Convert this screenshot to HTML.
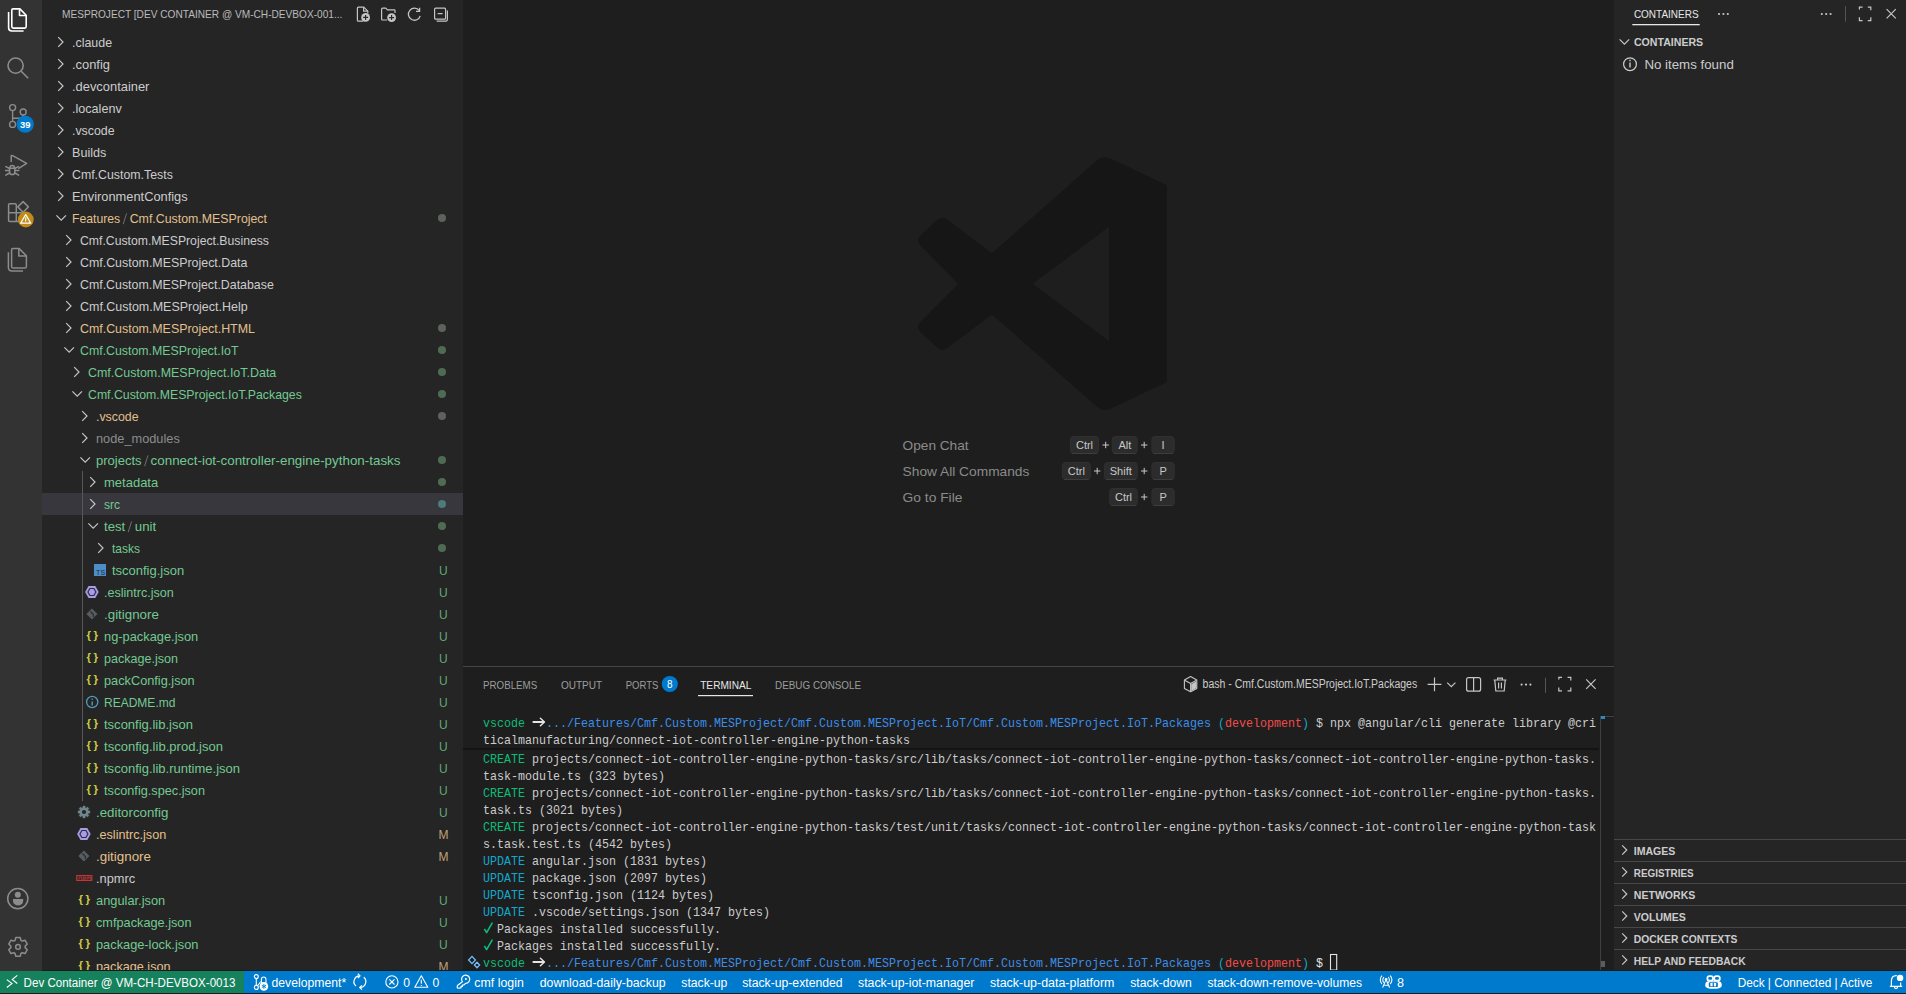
<!DOCTYPE html>
<html><head><meta charset="utf-8"><title>VS Code</title>
<style>
html,body{margin:0;padding:0;background:#1e1e1e;width:1906px;height:994px;overflow:hidden;}
svg{display:block;font-family:"Liberation Sans", sans-serif;}
</style></head><body>
<svg width="1906" height="994" viewBox="0 0 1906 994">
<rect x="0" y="0" width="1906" height="994" fill="#1e1e1e" />
<rect x="0" y="0" width="42" height="971" fill="#333333" />
<rect x="42" y="0" width="421" height="971" fill="#252526" />
<rect x="1614" y="0" width="292" height="971" fill="#252526" />
<g fill="none" stroke="#ffffff" stroke-width="1.6" stroke-linejoin="round"><path d="M13,8.9 H19.9 L26.2,15.2 V26.6 Q26.2,28.1 24.7,28.1 H13.3 Q11.8,28.1 11.8,26.6 V10.3 Q11.8,8.9 13,8.9 Z"/><path d="M19.5,9.2 V15.5 H26"/><path d="M8.6,12 V27.8 Q8.6,31 11.8,31 H23.6"/></g>
<g fill="none" stroke="#8c8c8c" stroke-width="1.6"><circle cx="15.6" cy="65.6" r="7.6"/><path d="M21.2,71.2 L28.2,78.2"/></g>
<g fill="none" stroke="#8c8c8c" stroke-width="1.4"><circle cx="12.6" cy="107.6" r="3"/><circle cx="23.2" cy="112" r="3"/><circle cx="12.6" cy="124.4" r="3"/><path d="M12.6,110.6 V121.4 M23.2,115 Q23.2,118.2 19,118.2 H12.8"/></g>
<circle cx="25.2" cy="124.2" r="8.6" fill="#007acc"/>
<text x="25.2" y="127.6" font-size="9.5" font-weight="bold" fill="#ffffff" text-anchor="middle">39</text>
<g fill="none" stroke="#8c8c8c" stroke-width="1.5" stroke-linejoin="round" stroke-linecap="round"><path d="M11.2,161.6 V156.4 Q11.2,155 12.6,155.6 L26.6,163.4 L18.8,168.4"/><path d="M9.6,168.2 V172.2 Q9.6,174.6 12.2,174.6 Q14.8,174.6 14.8,172.2 V168.2 Z"/><path d="M9.9,168 Q9.9,165.4 12.2,165.4 Q14.5,165.4 14.5,168"/><path d="M5.8,166.6 L9.2,168.2 M18.6,166.6 L15.2,168.2 M5.6,170.6 H9.2 M18.8,170.6 H15.2 M5.8,175.2 L9.4,173 M18.6,175.2 L15,173"/></g>
<g fill="none" stroke="#8c8c8c" stroke-width="1.5" stroke-linejoin="round"><path d="M9.6,203.7 H15 Q16.3,203.7 16.3,205 V221.6 H9.6 Q8.6,221.6 8.6,220.6 V204.7 Q8.6,203.7 9.6,203.7 Z M8.6,212.8 H24.6 M16.3,212.8 V221.6 H24"/><path d="M23.1,201.6 L28.4,206.9 L23.1,212.2 L17.8,206.9 Z"/></g>
<circle cx="25.8" cy="219.5" r="7.9" fill="#c08b18"/>
<path d="M25.7,214.6 L30.8,223.2 H20.6 Z" fill="none" stroke="#ffffff" stroke-width="1.2" stroke-linejoin="round"/>
<path d="M25.7,217.4 V221.6" stroke="#ffffff" stroke-width="1.1"/>
<g fill="none" stroke="#8c8c8c" stroke-width="1.5" stroke-linejoin="round"><path d="M12.8,248.6 H19.2 L26.4,255.8 V266.4 Q26.4,268 24.8,268 H13.2 Q11.6,268 11.6,266.4 V250 Q11.6,248.6 12.8,248.6 Z"/><path d="M18.8,248.9 V255.9 H26"/><path d="M8.4,252.2 V267.6 Q8.4,271 11.8,271 H23"/></g>
<g fill="none" stroke="#8c8c8c" stroke-width="1.5"><circle cx="17.8" cy="898.6" r="10.1"/></g>
<circle cx="17.8" cy="894.8" r="3" fill="#8c8c8c"/>
<path d="M13,898.9 H23.2 V900.6 Q23.2,905.4 18.1,905.4 Q13,905.4 13,900.6 Z" fill="#8c8c8c"/>
<path d="M15.07,940.32 L15.82,937.45 L20.18,937.45 L20.93,940.32 L22.23,941.08 L25.09,940.28 L27.28,944.06 L25.16,946.15 L25.16,947.65 L27.28,949.74 L25.09,953.52 L22.23,952.72 L20.93,953.48 L20.18,956.35 L15.82,956.35 L15.07,953.48 L13.77,952.72 L10.91,953.52 L8.72,949.74 L10.84,947.65 L10.84,946.15 L8.72,944.06 L10.91,940.28 L13.77,941.08Z" fill="none" stroke="#8c8c8c" stroke-width="1.5" stroke-linejoin="round"/><circle cx="18" cy="946.9" r="2.3" fill="none" stroke="#8c8c8c" stroke-width="1.5"/>
<text x="62" y="17.8" font-size="11" fill="#bbbbbb" textLength="280.4" lengthAdjust="spacingAndGlyphs" >MESPROJECT [DEV CONTAINER @ VM-CH-DEVBOX-001...</text>
<g fill="none" stroke="#c5c5c5" stroke-width="1.2" stroke-linejoin="round"><path d="M363.4,21.2 H358.4 Q357.4,21.2 357.4,20.2 V8.2 Q357.4,7.2 358.4,7.2 H363.8 L367.8,11.2 V13.4"/><path d="M363.6,7.4 V11.2 H367.6"/></g>
<circle cx="365.6" cy="17.4" r="4.4" fill="#c5c5c5"/><path d="M365.6,14.9 V19.9 M363.1,17.4 H368.1" stroke="#252526" stroke-width="1.1"/>
<g fill="none" stroke="#c5c5c5" stroke-width="1.2" stroke-linejoin="round"><path d="M387.2,20 H382.4 Q381.6,20 381.6,19.2 V9.2 Q381.6,8.2 382.6,8.2 H385.8 L387.4,9.8 H394.2 Q395,9.8 395,10.6 V13"/></g>
<circle cx="391.6" cy="17.6" r="4.4" fill="#c5c5c5"/><path d="M391.6,15.1 V20.1 M389.1,17.6 H394.1" stroke="#252526" stroke-width="1.1"/>
<g fill="none" stroke="#c5c5c5" stroke-width="1.3"><path d="M419.2,10.6 A6,6 0 1,0 420.2,15.8"/><path d="M419.6,7.8 V11.4 H416" stroke-linejoin="round"/></g>
<g fill="none" stroke="#c5c5c5" stroke-width="1.2" stroke-linejoin="round"><rect x="434.6" y="8.2" width="11" height="11" rx="1"/><path d="M437.6,13.6 H442.6"/><path d="M447.4,10.4 V19.6 Q447.4,21.2 445.8,21.2 H436.6"/></g>
<g id="tree">
<rect x="42" y="493" width="421" height="22" fill="#37373d" />
<rect x="82" y="471" width="1" height="330" fill="#585858" />
<path d="M58.2,37.2 L63.0,42.0 L58.2,46.8" fill="none" stroke="#c5c5c5" stroke-width="1.2"/>
<text x="72" y="47" font-size="13" fill="#cccccc" textLength="40.1" lengthAdjust="spacingAndGlyphs" >.claude</text>
<path d="M58.2,59.2 L63.0,64.0 L58.2,68.8" fill="none" stroke="#c5c5c5" stroke-width="1.2"/>
<text x="72" y="69" font-size="13" fill="#cccccc" textLength="38.0" lengthAdjust="spacingAndGlyphs" >.config</text>
<path d="M58.2,81.2 L63.0,86.0 L58.2,90.8" fill="none" stroke="#c5c5c5" stroke-width="1.2"/>
<text x="72" y="91" font-size="13" fill="#cccccc" textLength="77.4" lengthAdjust="spacingAndGlyphs" >.devcontainer</text>
<path d="M58.2,103.2 L63.0,108.0 L58.2,112.8" fill="none" stroke="#c5c5c5" stroke-width="1.2"/>
<text x="72" y="113" font-size="13" fill="#cccccc" textLength="49.7" lengthAdjust="spacingAndGlyphs" >.localenv</text>
<path d="M58.2,125.2 L63.0,130.0 L58.2,134.8" fill="none" stroke="#c5c5c5" stroke-width="1.2"/>
<text x="72" y="135" font-size="13" fill="#cccccc" textLength="42.6" lengthAdjust="spacingAndGlyphs" >.vscode</text>
<path d="M58.2,147.2 L63.0,152.0 L58.2,156.8" fill="none" stroke="#c5c5c5" stroke-width="1.2"/>
<text x="72" y="157" font-size="13" fill="#cccccc" textLength="34.3" lengthAdjust="spacingAndGlyphs" >Builds</text>
<path d="M58.2,169.2 L63.0,174.0 L58.2,178.8" fill="none" stroke="#c5c5c5" stroke-width="1.2"/>
<text x="72" y="179" font-size="13" fill="#cccccc" textLength="100.8" lengthAdjust="spacingAndGlyphs" >Cmf.Custom.Tests</text>
<path d="M58.2,191.2 L63.0,196.0 L58.2,200.8" fill="none" stroke="#c5c5c5" stroke-width="1.2"/>
<text x="72" y="201" font-size="13" fill="#cccccc" textLength="115.7" lengthAdjust="spacingAndGlyphs" >EnvironmentConfigs</text>
<path d="M56.4,215.4 L61.2,220.2 L66.0,215.4" fill="none" stroke="#c5c5c5" stroke-width="1.2"/>
<text x="72" y="223" font-size="13" fill="#e2c08d" textLength="48.2" lengthAdjust="spacingAndGlyphs" >Features</text>
<path d="M126.6,213.4 L123.2,224.2" stroke="#6f6f6f" stroke-width="1"/>
<text x="129.7" y="223" font-size="13" fill="#e2c08d" textLength="137.3" lengthAdjust="spacingAndGlyphs" >Cmf.Custom.MESProject</text>
<circle cx="442" cy="218" r="4" fill="#5d625c"/>
<path d="M66.2,235.2 L71.0,240.0 L66.2,244.8" fill="none" stroke="#c5c5c5" stroke-width="1.2"/>
<text x="80" y="245" font-size="13" fill="#cccccc" textLength="189.0" lengthAdjust="spacingAndGlyphs" >Cmf.Custom.MESProject.Business</text>
<path d="M66.2,257.2 L71.0,262.0 L66.2,266.8" fill="none" stroke="#c5c5c5" stroke-width="1.2"/>
<text x="80" y="267" font-size="13" fill="#cccccc" textLength="167.4" lengthAdjust="spacingAndGlyphs" >Cmf.Custom.MESProject.Data</text>
<path d="M66.2,279.2 L71.0,284.0 L66.2,288.8" fill="none" stroke="#c5c5c5" stroke-width="1.2"/>
<text x="80" y="289" font-size="13" fill="#cccccc" textLength="193.8" lengthAdjust="spacingAndGlyphs" >Cmf.Custom.MESProject.Database</text>
<path d="M66.2,301.2 L71.0,306.0 L66.2,310.8" fill="none" stroke="#c5c5c5" stroke-width="1.2"/>
<text x="80" y="311" font-size="13" fill="#cccccc" textLength="167.6" lengthAdjust="spacingAndGlyphs" >Cmf.Custom.MESProject.Help</text>
<path d="M66.2,323.2 L71.0,328.0 L66.2,332.8" fill="none" stroke="#c5c5c5" stroke-width="1.2"/>
<text x="80" y="333" font-size="13" fill="#e2c08d" textLength="174.9" lengthAdjust="spacingAndGlyphs" >Cmf.Custom.MESProject.HTML</text>
<circle cx="442" cy="328" r="4" fill="#5d625c"/>
<path d="M64.4,347.4 L69.2,352.2 L74.0,347.4" fill="none" stroke="#c5c5c5" stroke-width="1.2"/>
<text x="80" y="355" font-size="13" fill="#73c991" textLength="158.5" lengthAdjust="spacingAndGlyphs" >Cmf.Custom.MESProject.IoT</text>
<circle cx="442" cy="350" r="4" fill="#4e6c53"/>
<path d="M74.2,367.2 L79.0,372.0 L74.2,376.8" fill="none" stroke="#c5c5c5" stroke-width="1.2"/>
<text x="88" y="377" font-size="13" fill="#73c991" textLength="188.3" lengthAdjust="spacingAndGlyphs" >Cmf.Custom.MESProject.IoT.Data</text>
<circle cx="442" cy="372" r="4" fill="#4e6c53"/>
<path d="M72.4,391.4 L77.2,396.2 L82.0,391.4" fill="none" stroke="#c5c5c5" stroke-width="1.2"/>
<text x="88" y="399" font-size="13" fill="#73c991" textLength="213.8" lengthAdjust="spacingAndGlyphs" >Cmf.Custom.MESProject.IoT.Packages</text>
<circle cx="442" cy="394" r="4" fill="#4e6c53"/>
<path d="M82.2,411.2 L87.0,416.0 L82.2,420.8" fill="none" stroke="#c5c5c5" stroke-width="1.2"/>
<text x="96" y="421" font-size="13" fill="#e2c08d" textLength="42.5" lengthAdjust="spacingAndGlyphs" >.vscode</text>
<circle cx="442" cy="416" r="4" fill="#5d625c"/>
<path d="M82.2,433.2 L87.0,438.0 L82.2,442.8" fill="none" stroke="#c5c5c5" stroke-width="1.2"/>
<text x="96" y="443" font-size="13" fill="#8c8c8c" textLength="83.8" lengthAdjust="spacingAndGlyphs" >node_modules</text>
<path d="M80.4,457.4 L85.2,462.2 L90.0,457.4" fill="none" stroke="#c5c5c5" stroke-width="1.2"/>
<text x="96" y="465" font-size="13" fill="#73c991" textLength="45.6" lengthAdjust="spacingAndGlyphs" >projects</text>
<path d="M148.0,455.4 L144.6,466.2" stroke="#6f6f6f" stroke-width="1"/>
<text x="150.6" y="465" font-size="13" fill="#73c991" textLength="249.9" lengthAdjust="spacingAndGlyphs" >connect-iot-controller-engine-python-tasks</text>
<circle cx="442" cy="460" r="4" fill="#4e6c53"/>
<path d="M90.2,477.2 L95.0,482.0 L90.2,486.8" fill="none" stroke="#c5c5c5" stroke-width="1.2"/>
<text x="104" y="487" font-size="13" fill="#73c991" textLength="54.2" lengthAdjust="spacingAndGlyphs" >metadata</text>
<circle cx="442" cy="482" r="4" fill="#4e6c53"/>
<path d="M90.2,499.2 L95.0,504.0 L90.2,508.8" fill="none" stroke="#c5c5c5" stroke-width="1.2"/>
<text x="104" y="509" font-size="13" fill="#73c991" textLength="16.2" lengthAdjust="spacingAndGlyphs" >src</text>
<circle cx="442" cy="504" r="4" fill="#4c7b7a"/>
<path d="M88.4,523.4 L93.2,528.2 L98.0,523.4" fill="none" stroke="#c5c5c5" stroke-width="1.2"/>
<text x="104" y="531" font-size="13" fill="#73c991" textLength="21.2" lengthAdjust="spacingAndGlyphs" >test</text>
<path d="M131.6,521.4 L128.2,532.2" stroke="#6f6f6f" stroke-width="1"/>
<text x="134.8" y="531" font-size="13" fill="#73c991" textLength="21.4" lengthAdjust="spacingAndGlyphs" >unit</text>
<circle cx="442" cy="526" r="4" fill="#4e6c53"/>
<path d="M98.2,543.2 L103.0,548.0 L98.2,552.8" fill="none" stroke="#c5c5c5" stroke-width="1.2"/>
<text x="112" y="553" font-size="13" fill="#73c991" textLength="28.0" lengthAdjust="spacingAndGlyphs" >tasks</text>
<circle cx="442" cy="548" r="4" fill="#4e6c53"/>
<rect x="94" y="564" width="12" height="12" fill="#4d8ec8"/>
<text x="100.6" y="575" font-size="7" fill="#1e2a33" text-anchor="middle">TS</text>
<text x="112" y="575" font-size="13" fill="#73c991" textLength="72.1" lengthAdjust="spacingAndGlyphs" >tsconfig.json</text>
<text x="443.4" y="575" font-size="12" fill="#73c991" text-anchor="middle" fill-opacity="0.82">U</text>
<path d="M88.5,586 H95.30000000000001 L98.7,592 L95.30000000000001,598 H88.5 L85.10000000000001,592 Z" fill="#a59ee0"/>
<path d="M89.9,588.5 H93.9 L95.9,592 L93.9,595.5 H89.9 L87.9,592 Z" fill="none" stroke="#33294d" stroke-width="1.2"/>
<text x="104" y="597" font-size="13" fill="#73c991" textLength="69.8" lengthAdjust="spacingAndGlyphs" >.eslintrc.json</text>
<text x="443.4" y="597" font-size="12" fill="#73c991" text-anchor="middle" fill-opacity="0.82">U</text>
<path d="M91.9,608.4 L97.5,614 L91.9,619.6 L86.30000000000001,614 Z" fill="#575c61"/>
<path d="M90.4,611.5 L93.4,614.5 V617" stroke="#2d2d30" stroke-width="1.2" fill="none"/>
<text x="104" y="619" font-size="13" fill="#73c991" textLength="54.9" lengthAdjust="spacingAndGlyphs" >.gitignore</text>
<text x="443.4" y="619" font-size="12" fill="#73c991" text-anchor="middle" fill-opacity="0.82">U</text>
<text x="86.4" y="639.4" font-size="11.5" font-weight="bold" fill="#cbcb41" textLength="11.6" lengthAdjust="spacing">{}</text>
<text x="104" y="641" font-size="13" fill="#73c991" textLength="94.2" lengthAdjust="spacingAndGlyphs" >ng-package.json</text>
<text x="443.4" y="641" font-size="12" fill="#73c991" text-anchor="middle" fill-opacity="0.82">U</text>
<text x="86.4" y="661.4" font-size="11.5" font-weight="bold" fill="#cbcb41" textLength="11.6" lengthAdjust="spacing">{}</text>
<text x="104" y="663" font-size="13" fill="#73c991" textLength="74.0" lengthAdjust="spacingAndGlyphs" >package.json</text>
<text x="443.4" y="663" font-size="12" fill="#73c991" text-anchor="middle" fill-opacity="0.82">U</text>
<text x="86.4" y="683.4" font-size="11.5" font-weight="bold" fill="#cbcb41" textLength="11.6" lengthAdjust="spacing">{}</text>
<text x="104" y="685" font-size="13" fill="#73c991" textLength="90.7" lengthAdjust="spacingAndGlyphs" >packConfig.json</text>
<text x="443.4" y="685" font-size="12" fill="#73c991" text-anchor="middle" fill-opacity="0.82">U</text>
<circle cx="92.2" cy="702" r="5.6" fill="none" stroke="#519aba" stroke-width="1.3"/>
<path d="M92.2,701.4 V705.4 M92.2,698.6 V699.8" stroke="#519aba" stroke-width="1.4"/>
<text x="104" y="707" font-size="13" fill="#73c991" textLength="71.4" lengthAdjust="spacingAndGlyphs" >README.md</text>
<text x="443.4" y="707" font-size="12" fill="#73c991" text-anchor="middle" fill-opacity="0.82">U</text>
<text x="86.4" y="727.4" font-size="11.5" font-weight="bold" fill="#cbcb41" textLength="11.6" lengthAdjust="spacing">{}</text>
<text x="104" y="729" font-size="13" fill="#73c991" textLength="89.0" lengthAdjust="spacingAndGlyphs" >tsconfig.lib.json</text>
<text x="443.4" y="729" font-size="12" fill="#73c991" text-anchor="middle" fill-opacity="0.82">U</text>
<text x="86.4" y="749.4" font-size="11.5" font-weight="bold" fill="#cbcb41" textLength="11.6" lengthAdjust="spacing">{}</text>
<text x="104" y="751" font-size="13" fill="#73c991" textLength="119.0" lengthAdjust="spacingAndGlyphs" >tsconfig.lib.prod.json</text>
<text x="443.4" y="751" font-size="12" fill="#73c991" text-anchor="middle" fill-opacity="0.82">U</text>
<text x="86.4" y="771.4" font-size="11.5" font-weight="bold" fill="#cbcb41" textLength="11.6" lengthAdjust="spacing">{}</text>
<text x="104" y="773" font-size="13" fill="#73c991" textLength="136.1" lengthAdjust="spacingAndGlyphs" >tsconfig.lib.runtime.json</text>
<text x="443.4" y="773" font-size="12" fill="#73c991" text-anchor="middle" fill-opacity="0.82">U</text>
<text x="86.4" y="793.4" font-size="11.5" font-weight="bold" fill="#cbcb41" textLength="11.6" lengthAdjust="spacing">{}</text>
<text x="104" y="795" font-size="13" fill="#73c991" textLength="101.0" lengthAdjust="spacingAndGlyphs" >tsconfig.spec.json</text>
<text x="443.4" y="795" font-size="12" fill="#73c991" text-anchor="middle" fill-opacity="0.82">U</text>
<path d="M82.79,807.77 L82.96,806.09 L85.04,806.09 L85.21,807.77 L86.13,808.15 L87.44,807.09 L88.91,808.56 L87.85,809.87 L88.23,810.79 L89.91,810.96 L89.91,813.04 L88.23,813.21 L87.85,814.13 L88.91,815.44 L87.44,816.91 L86.13,815.85 L85.21,816.23 L85.04,817.91 L82.96,817.91 L82.79,816.23 L81.87,815.85 L80.56,816.91 L79.09,815.44 L80.15,814.13 L79.77,813.21 L78.09,813.04 L78.09,810.96 L79.77,810.79 L80.15,809.87 L79.09,808.56 L80.56,807.09 L81.87,808.15Z" fill="#71858a" stroke="#71858a" stroke-width="0.5" stroke-linejoin="round"/><circle cx="84" cy="812" r="2.1" fill="#252526"/>
<text x="96" y="817" font-size="13" fill="#73c991" textLength="72.4" lengthAdjust="spacingAndGlyphs" >.editorconfig</text>
<text x="443.4" y="817" font-size="12" fill="#73c991" text-anchor="middle" fill-opacity="0.82">U</text>
<path d="M80.5,828 H87.30000000000001 L90.7,834 L87.30000000000001,840 H80.5 L77.10000000000001,834 Z" fill="#a59ee0"/>
<path d="M81.9,830.5 H85.9 L87.9,834 L85.9,837.5 H81.9 L79.9,834 Z" fill="none" stroke="#33294d" stroke-width="1.2"/>
<text x="96" y="839" font-size="13" fill="#e2c08d" textLength="70.2" lengthAdjust="spacingAndGlyphs" >.eslintrc.json</text>
<text x="443.4" y="839" font-size="12" fill="#e2c08d" text-anchor="middle" fill-opacity="0.82">M</text>
<path d="M83.9,850.4 L89.5,856 L83.9,861.6 L78.30000000000001,856 Z" fill="#575c61"/>
<path d="M82.4,853.5 L85.4,856.5 V859" stroke="#2d2d30" stroke-width="1.2" fill="none"/>
<text x="96" y="861" font-size="13" fill="#e2c08d" textLength="55.0" lengthAdjust="spacingAndGlyphs" >.gitignore</text>
<text x="443.4" y="861" font-size="12" fill="#e2c08d" text-anchor="middle" fill-opacity="0.82">M</text>
<rect x="76.8" y="875.6" width="15" height="4.8" fill="none" stroke="#cb3837" stroke-width="1.1"/>
<path d="M79,879.6 V877.1 H81.6 V879.6 M83.2,880.6 V877.1 H85.8 V879 H83.2 M87.2,879.6 V877.1 H90.4 V879.6 M88.8,877.1 V879.2" fill="none" stroke="#cb3837" stroke-width="0.8"/>
<text x="96" y="883" font-size="13" fill="#cccccc" textLength="39.2" lengthAdjust="spacingAndGlyphs" >.npmrc</text>
<text x="78.4" y="903.4" font-size="11.5" font-weight="bold" fill="#cbcb41" textLength="11.6" lengthAdjust="spacing">{}</text>
<text x="96" y="905" font-size="13" fill="#73c991" textLength="69.2" lengthAdjust="spacingAndGlyphs" >angular.json</text>
<text x="443.4" y="905" font-size="12" fill="#73c991" text-anchor="middle" fill-opacity="0.82">U</text>
<text x="78.4" y="925.4" font-size="11.5" font-weight="bold" fill="#cbcb41" textLength="11.6" lengthAdjust="spacing">{}</text>
<text x="96" y="927" font-size="13" fill="#73c991" textLength="95.5" lengthAdjust="spacingAndGlyphs" >cmfpackage.json</text>
<text x="443.4" y="927" font-size="12" fill="#73c991" text-anchor="middle" fill-opacity="0.82">U</text>
<text x="78.4" y="947.4" font-size="11.5" font-weight="bold" fill="#cbcb41" textLength="11.6" lengthAdjust="spacing">{}</text>
<text x="96" y="949" font-size="13" fill="#73c991" textLength="102.4" lengthAdjust="spacingAndGlyphs" >package-lock.json</text>
<text x="443.4" y="949" font-size="12" fill="#73c991" text-anchor="middle" fill-opacity="0.82">U</text>
<text x="78.4" y="969.4" font-size="11.5" font-weight="bold" fill="#cbcb41" textLength="11.6" lengthAdjust="spacing">{}</text>
<text x="96" y="971" font-size="13" fill="#e2c08d" textLength="74.6" lengthAdjust="spacingAndGlyphs" >package.json</text>
<text x="443.4" y="971" font-size="12" fill="#e2c08d" text-anchor="middle" fill-opacity="0.82">M</text>
</g>
<path d="M1098,159.5 Q1104,155.5 1111,158.8 L1166.9,185.2 V382.1 L1111,408.6 Q1104,412 1098,407.5 L991.9,314.4 L946.5,348.6 Q942,351.6 937.6,348 L920,331.4 Q916.2,327 920,322.6 L958.3,283.8 L920,245 Q916.2,240.6 920,236.2 L937.6,219.6 Q942,216 946.5,219 L991.9,253.2 Z M1032.7,283.8 L1109.2,341.3 V226.6 Z" fill="#161616" fill-rule="evenodd"/>
<text x="902.6" y="450" font-size="13" fill="#8b8b8b" textLength="66.0" lengthAdjust="spacingAndGlyphs" >Open Chat</text>
<text x="902.6" y="476" font-size="13" fill="#8b8b8b" textLength="126.8" lengthAdjust="spacingAndGlyphs" >Show All Commands</text>
<text x="902.6" y="502" font-size="13" fill="#8b8b8b" textLength="59.8" lengthAdjust="spacingAndGlyphs" >Go to File</text>
<rect x="1070.5" y="436.5" width="28" height="17" rx="3" fill="#2c2c2c" stroke="#303030" stroke-width="1"/>
<path d="M1072,453.5 H1097" stroke="#3d3d3d" stroke-width="1"/>
<text x="1084.5" y="448.6" font-size="11" fill="#c8c8c8" text-anchor="middle">Ctrl</text>
<path d="M1102.5,445 H1108.9 M1105.7,441.8 V448.2" stroke="#c8c8c8" stroke-width="1"/>
<rect x="1112.3" y="436.5" width="24.90000000000009" height="17" rx="3" fill="#2c2c2c" stroke="#303030" stroke-width="1"/>
<path d="M1113.8,453.5 H1135.7" stroke="#3d3d3d" stroke-width="1"/>
<text x="1124.8" y="448.6" font-size="11" fill="#c8c8c8" text-anchor="middle">Alt</text>
<path d="M1141.0,445 H1147.4 M1144.2,441.8 V448.2" stroke="#c8c8c8" stroke-width="1"/>
<rect x="1151.9" y="436.5" width="22.299999999999955" height="17" rx="3" fill="#2c2c2c" stroke="#303030" stroke-width="1"/>
<path d="M1153.4,453.5 H1172.7" stroke="#3d3d3d" stroke-width="1"/>
<text x="1163.1" y="448.6" font-size="11" fill="#c8c8c8" text-anchor="middle">I</text>
<rect x="1062.5" y="462.5" width="27.799999999999955" height="17" rx="3" fill="#2c2c2c" stroke="#303030" stroke-width="1"/>
<path d="M1064,479.5 H1088.8" stroke="#3d3d3d" stroke-width="1"/>
<text x="1076.4" y="474.6" font-size="11" fill="#c8c8c8" text-anchor="middle">Ctrl</text>
<path d="M1094.0,471 H1100.4 M1097.2,467.8 V474.2" stroke="#c8c8c8" stroke-width="1"/>
<rect x="1104.4" y="462.5" width="32.799999999999955" height="17" rx="3" fill="#2c2c2c" stroke="#303030" stroke-width="1"/>
<path d="M1105.9,479.5 H1135.7" stroke="#3d3d3d" stroke-width="1"/>
<text x="1120.8" y="474.6" font-size="11" fill="#c8c8c8" text-anchor="middle">Shift</text>
<path d="M1141.0,471 H1147.4 M1144.2,467.8 V474.2" stroke="#c8c8c8" stroke-width="1"/>
<rect x="1151.9" y="462.5" width="22.299999999999955" height="17" rx="3" fill="#2c2c2c" stroke="#303030" stroke-width="1"/>
<path d="M1153.4,479.5 H1172.7" stroke="#3d3d3d" stroke-width="1"/>
<text x="1163.1" y="474.6" font-size="11" fill="#c8c8c8" text-anchor="middle">P</text>
<rect x="1109.7" y="488.5" width="27.5" height="17" rx="3" fill="#2c2c2c" stroke="#303030" stroke-width="1"/>
<path d="M1111.2,505.5 H1135.7" stroke="#3d3d3d" stroke-width="1"/>
<text x="1123.5" y="500.6" font-size="11" fill="#c8c8c8" text-anchor="middle">Ctrl</text>
<path d="M1141.0,497 H1147.4 M1144.2,493.8 V500.2" stroke="#c8c8c8" stroke-width="1"/>
<rect x="1151.9" y="488.5" width="22.299999999999955" height="17" rx="3" fill="#2c2c2c" stroke="#303030" stroke-width="1"/>
<path d="M1153.4,505.5 H1172.7" stroke="#3d3d3d" stroke-width="1"/>
<text x="1163.1" y="500.6" font-size="11" fill="#c8c8c8" text-anchor="middle">P</text>
<rect x="463" y="666" width="1151" height="1" fill="#474747" />
<text x="483.1" y="689.2" font-size="11" fill="#9d9d9d" textLength="54.1" lengthAdjust="spacingAndGlyphs" >PROBLEMS</text>
<text x="560.9" y="689.2" font-size="11" fill="#9d9d9d" textLength="41.3" lengthAdjust="spacingAndGlyphs" >OUTPUT</text>
<text x="625.7" y="689.2" font-size="11" fill="#9d9d9d" textLength="32.7" lengthAdjust="spacingAndGlyphs" >PORTS</text>
<circle cx="669.8" cy="684" r="8.1" fill="#007acc"/>
<text x="669.8" y="687.8" font-size="10" fill="#ffffff" text-anchor="middle">8</text>
<text x="700.2" y="689.2" font-size="11" fill="#e7e7e7" textLength="51.2" lengthAdjust="spacingAndGlyphs" >TERMINAL</text>
<rect x="698" y="695" width="55" height="1.2" fill="#e7e7e7" />
<text x="775.1" y="689.2" font-size="11" fill="#9d9d9d" textLength="86.0" lengthAdjust="spacingAndGlyphs" >DEBUG CONSOLE</text>
<g fill="none" stroke="#c5c5c5" stroke-width="1.1" stroke-linejoin="round"><path d="M1190.6,676.6 L1196.8,680 V688.4 L1190.6,691.8 L1184.4,688.4 V680 Z"/><path d="M1184.6,680.2 L1190.6,683.6 L1196.6,680.2 M1190.6,683.6 V691.6"/></g>
<path d="M1191.2,684.2 L1196.4,681.2 V688 L1191.2,691 Z" fill="#c5c5c5"/>
<text x="1202.6" y="688.4" font-size="12" fill="#cccccc" textLength="214.6" lengthAdjust="spacingAndGlyphs" >bash - Cmf.Custom.MESProject.IoT.Packages</text>
<g fill="none" stroke="#c5c5c5" stroke-width="1.2"><path d="M1427.6,684.4 H1441.4 M1434.5,677.5 V691.3"/><path d="M1447.2,682.6 L1451.3,686.6 L1455.4,682.6"/><rect x="1466.6" y="677.6" width="14" height="13.6" rx="2"/><path d="M1473.6,677.8 V691"/><path d="M1493.6,680 H1506.4 M1497.6,680 V678.2 H1502.4 V680 M1494.8,680.4 L1495.8,691 H1504.2 L1505.2,680.4 M1498.6,682.6 V688.6 M1501.4,682.6 V688.6"/><path d="M1558.8,679.6 V677.4 H1562 M1567.6,677.4 H1570.8 V680.6 M1570.8,687.4 V690.8 H1567.6 M1562,690.8 H1558.8 V687.4"/><path d="M1586.2,679.4 L1595.6,688.8 M1595.6,679.4 L1586.2,688.8"/></g>
<g fill="#c5c5c5"><circle cx="1521.6" cy="684.6" r="1.1"/><circle cx="1526" cy="684.6" r="1.1"/><circle cx="1530.4" cy="684.6" r="1.1"/></g>
<rect x="1545" y="677.8" width="1" height="15" fill="#555555" />
<text x="483.0" y="727" font-family='"Liberation Mono", monospace' font-size="13" fill="#0dbc79" textLength="42.0" lengthAdjust="spacingAndGlyphs">vscode</text>
<text x="546.0" y="727" font-family='"Liberation Mono", monospace' font-size="13" fill="#3b8eea" textLength="665.0" lengthAdjust="spacingAndGlyphs">.../Features/Cmf.Custom.MESProject/Cmf.Custom.MESProject.IoT/Cmf.Custom.MESProject.IoT.Packages</text>
<text x="1218.0" y="727" font-family='"Liberation Mono", monospace' font-size="13" fill="#11a8cd" textLength="7.0" lengthAdjust="spacingAndGlyphs">(</text>
<text x="1225.0" y="727" font-family='"Liberation Mono", monospace' font-size="13" fill="#f14c4c" textLength="77.0" lengthAdjust="spacingAndGlyphs">development</text>
<text x="1302.0" y="727" font-family='"Liberation Mono", monospace' font-size="13" fill="#11a8cd" textLength="7.0" lengthAdjust="spacingAndGlyphs">)</text>
<text x="1316.0" y="727" font-family='"Liberation Mono", monospace' font-size="13" fill="#cccccc" textLength="280.0" lengthAdjust="spacingAndGlyphs">$ npx @angular/cli generate library @cri</text>
<path d="M533.4,722.0 H543.4" stroke="#e5e5e5" stroke-width="2.1" stroke-linecap="round"/>
<path d="M540.4,718.3 L544.4,722.0 L540.4,725.8" fill="none" stroke="#e5e5e5" stroke-width="1.5" stroke-linejoin="round" stroke-linecap="round"/>
<text x="483.0" y="744" font-family='"Liberation Mono", monospace' font-size="13" fill="#cccccc" textLength="427.0" lengthAdjust="spacingAndGlyphs">ticalmanufacturing/connect-iot-controller-engine-python-tasks</text>
<rect x="463" y="748" width="1136" height="1" fill="#121212" />
<rect x="463" y="749" width="1136" height="1" fill="#161616" />
<rect x="463" y="750" width="1136" height="1" fill="#1b1b1b" />
<text x="483.0" y="763" font-family='"Liberation Mono", monospace' font-size="13" fill="#0dbc79" textLength="42.0" lengthAdjust="spacingAndGlyphs">CREATE</text>
<text x="532.0" y="763" font-family='"Liberation Mono", monospace' font-size="13" fill="#cccccc" textLength="1064.0" lengthAdjust="spacingAndGlyphs">projects/connect-iot-controller-engine-python-tasks/src/lib/tasks/connect-iot-controller-engine-python-tasks/connect-iot-controller-engine-python-tasks.</text>
<text x="483.0" y="780" font-family='"Liberation Mono", monospace' font-size="13" fill="#cccccc" textLength="182.0" lengthAdjust="spacingAndGlyphs">task-module.ts (323 bytes)</text>
<text x="483.0" y="797" font-family='"Liberation Mono", monospace' font-size="13" fill="#0dbc79" textLength="42.0" lengthAdjust="spacingAndGlyphs">CREATE</text>
<text x="532.0" y="797" font-family='"Liberation Mono", monospace' font-size="13" fill="#cccccc" textLength="1064.0" lengthAdjust="spacingAndGlyphs">projects/connect-iot-controller-engine-python-tasks/src/lib/tasks/connect-iot-controller-engine-python-tasks/connect-iot-controller-engine-python-tasks.</text>
<text x="483.0" y="814" font-family='"Liberation Mono", monospace' font-size="13" fill="#cccccc" textLength="140.0" lengthAdjust="spacingAndGlyphs">task.ts (3021 bytes)</text>
<text x="483.0" y="831" font-family='"Liberation Mono", monospace' font-size="13" fill="#0dbc79" textLength="42.0" lengthAdjust="spacingAndGlyphs">CREATE</text>
<text x="532.0" y="831" font-family='"Liberation Mono", monospace' font-size="13" fill="#cccccc" textLength="1064.0" lengthAdjust="spacingAndGlyphs">projects/connect-iot-controller-engine-python-tasks/test/unit/tasks/connect-iot-controller-engine-python-tasks/connect-iot-controller-engine-python-task</text>
<text x="483.0" y="848" font-family='"Liberation Mono", monospace' font-size="13" fill="#cccccc" textLength="189.0" lengthAdjust="spacingAndGlyphs">s.task.test.ts (4542 bytes)</text>
<text x="483.0" y="865" font-family='"Liberation Mono", monospace' font-size="13" fill="#11a8cd" textLength="42.0" lengthAdjust="spacingAndGlyphs">UPDATE</text>
<text x="532.0" y="865" font-family='"Liberation Mono", monospace' font-size="13" fill="#cccccc" textLength="175.0" lengthAdjust="spacingAndGlyphs">angular.json (1831 bytes)</text>
<text x="483.0" y="882" font-family='"Liberation Mono", monospace' font-size="13" fill="#11a8cd" textLength="42.0" lengthAdjust="spacingAndGlyphs">UPDATE</text>
<text x="532.0" y="882" font-family='"Liberation Mono", monospace' font-size="13" fill="#cccccc" textLength="175.0" lengthAdjust="spacingAndGlyphs">package.json (2097 bytes)</text>
<text x="483.0" y="899" font-family='"Liberation Mono", monospace' font-size="13" fill="#11a8cd" textLength="42.0" lengthAdjust="spacingAndGlyphs">UPDATE</text>
<text x="532.0" y="899" font-family='"Liberation Mono", monospace' font-size="13" fill="#cccccc" textLength="182.0" lengthAdjust="spacingAndGlyphs">tsconfig.json (1124 bytes)</text>
<text x="483.0" y="916" font-family='"Liberation Mono", monospace' font-size="13" fill="#11a8cd" textLength="42.0" lengthAdjust="spacingAndGlyphs">UPDATE</text>
<text x="532.0" y="916" font-family='"Liberation Mono", monospace' font-size="13" fill="#cccccc" textLength="238.0" lengthAdjust="spacingAndGlyphs">.vscode/settings.json (1347 bytes)</text>
<path d="M484.4,928.8 L486.6,932.6 L492.4,922.6" fill="none" stroke="#0dbc79" stroke-width="1.6" stroke-linejoin="round"/>
<text x="497.0" y="933" font-family='"Liberation Mono", monospace' font-size="13" fill="#cccccc" textLength="224.0" lengthAdjust="spacingAndGlyphs">Packages installed successfully.</text>
<path d="M484.4,945.8 L486.6,949.6 L492.4,939.6" fill="none" stroke="#0dbc79" stroke-width="1.6" stroke-linejoin="round"/>
<text x="497.0" y="950" font-family='"Liberation Mono", monospace' font-size="13" fill="#cccccc" textLength="224.0" lengthAdjust="spacingAndGlyphs">Packages installed successfully.</text>
<text x="483.0" y="967" font-family='"Liberation Mono", monospace' font-size="13" fill="#0dbc79" textLength="42.0" lengthAdjust="spacingAndGlyphs">vscode</text>
<text x="546.0" y="967" font-family='"Liberation Mono", monospace' font-size="13" fill="#3b8eea" textLength="665.0" lengthAdjust="spacingAndGlyphs">.../Features/Cmf.Custom.MESProject/Cmf.Custom.MESProject.IoT/Cmf.Custom.MESProject.IoT.Packages</text>
<text x="1218.0" y="967" font-family='"Liberation Mono", monospace' font-size="13" fill="#11a8cd" textLength="7.0" lengthAdjust="spacingAndGlyphs">(</text>
<text x="1225.0" y="967" font-family='"Liberation Mono", monospace' font-size="13" fill="#f14c4c" textLength="77.0" lengthAdjust="spacingAndGlyphs">development</text>
<text x="1302.0" y="967" font-family='"Liberation Mono", monospace' font-size="13" fill="#11a8cd" textLength="7.0" lengthAdjust="spacingAndGlyphs">)</text>
<text x="1316.0" y="967" font-family='"Liberation Mono", monospace' font-size="13" fill="#e5e5e5" textLength="7.0" lengthAdjust="spacingAndGlyphs">$</text>
<path d="M533.4,962.0 H543.4" stroke="#e5e5e5" stroke-width="2.1" stroke-linecap="round"/>
<path d="M540.4,958.3 L544.4,962.0 L540.4,965.8" fill="none" stroke="#e5e5e5" stroke-width="1.5" stroke-linejoin="round" stroke-linecap="round"/>
<rect x="1330.5" y="954.5" width="6.2" height="15.6" fill="none" stroke="#e5e5e5" stroke-width="1.1"/>
<g fill="none" stroke="#75beff" stroke-width="1.3"><path d="M472,956.4 L475.4,960 L472,963.6 L468.6,960 Z"/><path d="M477,962.2 L479.6,965 L477,967.8 L474.4,965 Z"/></g>
<rect x="1600" y="716" width="1" height="255" fill="#404040" />
<rect x="1600" y="716" width="14" height="1" fill="#404040" />
<rect x="1601" y="716" width="4" height="3" fill="#2b8ac6" />
<rect x="1601" y="961" width="4" height="6" fill="#5a5d5e" />
<text x="1633.9" y="17.9" font-size="11" fill="#e7e7e7" textLength="64.7" lengthAdjust="spacingAndGlyphs" >CONTAINERS</text>
<rect x="1632.3" y="24" width="67.4" height="1.3" fill="#e7e7e7" />
<g fill="#c5c5c5"><circle cx="1719" cy="14" r="1.1"/><circle cx="1723.4" cy="14" r="1.1"/><circle cx="1727.8" cy="14" r="1.1"/><circle cx="1821.8" cy="14" r="1.1"/><circle cx="1826.2" cy="14" r="1.1"/><circle cx="1830.6" cy="14" r="1.1"/></g>
<rect x="1845" y="6.2" width="1" height="15.4" fill="#555555" />
<g fill="none" stroke="#c5c5c5" stroke-width="1.2"><path d="M1859.4,9.4 V7.2 H1862.6 M1867.8,7.2 H1870.8 V10.2 M1870.8,17.2 V20.6 H1867.8 M1862.6,20.6 H1859.4 V17.2"/><path d="M1886.6,9.2 L1895.8,18.4 M1895.8,9.2 L1886.6,18.4"/></g>
<path d="M1619.6,39.4 L1624.4,44.2 L1629.2,39.4" fill="none" stroke="#c5c5c5" stroke-width="1.2"/>
<text x="1633.9" y="46" font-size="11" fill="#cccccc" font-weight="bold" textLength="69.3" lengthAdjust="spacingAndGlyphs" >CONTAINERS</text>
<circle cx="1630" cy="64.2" r="6.4" fill="none" stroke="#cccccc" stroke-width="1.2"/>
<path d="M1630,62.6 V67.6 M1630,59.8 V61.2" stroke="#cccccc" stroke-width="1.4"/>
<text x="1644.4" y="68.8" font-size="13" fill="#cccccc" textLength="89.4" lengthAdjust="spacingAndGlyphs" >No items found</text>
<rect x="1614" y="839" width="292" height="1" fill="#484849" />
<path d="M1622.2,845.3 L1626.8,850.0 L1622.2,854.7" fill="none" stroke="#c5c5c5" stroke-width="1.2"/>
<text x="1633.8" y="854.7" font-size="11" fill="#cccccc" font-weight="bold" textLength="41.6" lengthAdjust="spacingAndGlyphs" >IMAGES</text>
<rect x="1614" y="861" width="292" height="1" fill="#484849" />
<path d="M1622.2,867.3 L1626.8,872.0 L1622.2,876.7" fill="none" stroke="#c5c5c5" stroke-width="1.2"/>
<text x="1633.8" y="876.7" font-size="11" fill="#cccccc" font-weight="bold" textLength="59.8" lengthAdjust="spacingAndGlyphs" >REGISTRIES</text>
<rect x="1614" y="883" width="292" height="1" fill="#484849" />
<path d="M1622.2,889.3 L1626.8,894.0 L1622.2,898.7" fill="none" stroke="#c5c5c5" stroke-width="1.2"/>
<text x="1633.8" y="898.7" font-size="11" fill="#cccccc" font-weight="bold" textLength="61.5" lengthAdjust="spacingAndGlyphs" >NETWORKS</text>
<rect x="1614" y="905" width="292" height="1" fill="#484849" />
<path d="M1622.2,911.3 L1626.8,916.0 L1622.2,920.7" fill="none" stroke="#c5c5c5" stroke-width="1.2"/>
<text x="1633.8" y="920.7" font-size="11" fill="#cccccc" font-weight="bold" textLength="52.1" lengthAdjust="spacingAndGlyphs" >VOLUMES</text>
<rect x="1614" y="927" width="292" height="1" fill="#484849" />
<path d="M1622.2,933.3 L1626.8,938.0 L1622.2,942.7" fill="none" stroke="#c5c5c5" stroke-width="1.2"/>
<text x="1633.8" y="942.7" font-size="11" fill="#cccccc" font-weight="bold" textLength="103.5" lengthAdjust="spacingAndGlyphs" >DOCKER CONTEXTS</text>
<rect x="1614" y="949" width="292" height="1" fill="#484849" />
<path d="M1622.2,955.3 L1626.8,960.0 L1622.2,964.7" fill="none" stroke="#c5c5c5" stroke-width="1.2"/>
<text x="1633.8" y="964.7" font-size="11" fill="#cccccc" font-weight="bold" textLength="111.8" lengthAdjust="spacingAndGlyphs" >HELP AND FEEDBACK</text>
<rect x="42" y="970" width="1864" height="1" fill="#1b1b1b" />
<rect x="0" y="971" width="1906" height="22" fill="#007acc" />
<rect x="0" y="971" width="244" height="22" fill="#16825d" />
<rect x="0" y="993" width="1906" height="1" fill="#1c1c1c" />
<path d="M6.8,979.6 L12,983.5 L6.8,987.5 M17.3,975.4 L12.2,979.5 L17.3,983.5" fill="none" stroke="#ffffff" stroke-width="1.1"/>
<text x="23.6" y="987" font-size="12" fill="#ffffff" textLength="211.8" lengthAdjust="spacingAndGlyphs" >Dev Container @ VM-CH-DEVBOX-0013</text>
<g fill="none" stroke="#ffffff" stroke-width="1.1"><circle cx="256.3" cy="976.6" r="2"/><circle cx="256.3" cy="987.4" r="2"/><path d="M256.3,978.6 V985.4 M257.6,985.6 Q260,983 260.6,981.6"/><path d="M261.4,983.4 V979.4 Q261.4,977 263.7,977 Q266,977 266,979.4 V983.4"/></g>
<circle cx="263.9" cy="986.4" r="4.3" fill="#ffffff"/><path d="M263.9,984 V988.8 M261.8,985.2 L266,987.6 M266,985.2 L261.8,987.6" stroke="#007acc" stroke-width="0.9"/>
<text x="271.5" y="987" font-size="12" fill="#ffffff" textLength="74.7" lengthAdjust="spacingAndGlyphs" >development*</text>
<g fill="none" stroke="#ffffff" stroke-width="1.2" stroke-linejoin="round"><path d="M359.9,975.9 A5.8,5.8 0 0,0 356,986.1"/><path d="M359.9,987.5 A5.8,5.8 0 0,0 363.8,977.3"/><path d="M357.8,973.8 L360.1,975.9 L357.8,978 M362,985.4 L359.7,987.5 L362,989.6"/></g>
<g fill="none" stroke="#ffffff" stroke-width="1.1"><circle cx="391.9" cy="981.9" r="6.1"/><path d="M389.3,979.3 L394.5,984.5 M394.5,979.3 L389.3,984.5"/><path d="M421.3,975.8 L427.8,987.2 H414.8 Z" stroke-linejoin="round"/><path d="M421.3,979.8 V983.8 M421.3,985 V985.9"/></g>
<text x="403.2" y="987" font-size="12" fill="#ffffff" textLength="6.8" lengthAdjust="spacingAndGlyphs" >0</text>
<text x="432.6" y="987" font-size="12" fill="#ffffff" textLength="6.8" lengthAdjust="spacingAndGlyphs" >0</text>
<g fill="none" stroke="#ffffff" stroke-width="1.2" stroke-linejoin="round"><path d="M462.4,981.8 A4.1,4.1 0 1,1 465.6,983.4 L463.8,985 H462.4 V986.4 H461 V987.8 L458.6,988.2 Q457.2,988.4 457.2,987 L457.4,985.6 Z"/></g>
<circle cx="465.9" cy="979" r="1" fill="#ffffff"/>
<text x="474.3" y="987" font-size="12" fill="#ffffff" textLength="49.5" lengthAdjust="spacingAndGlyphs" >cmf login</text>
<text x="539.7" y="987" font-size="12" fill="#ffffff" textLength="125.9" lengthAdjust="spacingAndGlyphs" >download-daily-backup</text>
<text x="681.3" y="987" font-size="12" fill="#ffffff" textLength="46.1" lengthAdjust="spacingAndGlyphs" >stack-up</text>
<text x="742.2" y="987" font-size="12" fill="#ffffff" textLength="100.4" lengthAdjust="spacingAndGlyphs" >stack-up-extended</text>
<text x="858" y="987" font-size="12" fill="#ffffff" textLength="116.4" lengthAdjust="spacingAndGlyphs" >stack-up-iot-manager</text>
<text x="990" y="987" font-size="12" fill="#ffffff" textLength="124.4" lengthAdjust="spacingAndGlyphs" >stack-up-data-platform</text>
<text x="1130.2" y="987" font-size="12" fill="#ffffff" textLength="61.7" lengthAdjust="spacingAndGlyphs" >stack-down</text>
<text x="1207.5" y="987" font-size="12" fill="#ffffff" textLength="154.5" lengthAdjust="spacingAndGlyphs" >stack-down-remove-volumes</text>
<g fill="none" stroke="#ffffff" stroke-width="1.1"><path d="M1386,979.6 L1382.6,987.6 M1386,979.6 L1389.6,987.6 M1383.6,985.2 H1388.6"/><path d="M1384,977.2 A3.6,3.6 0 0,0 1384,982.6 M1388.2,977.2 A3.6,3.6 0 0,1 1388.2,982.6 M1382,975.6 A6,6 0 0,0 1382,984 M1390.2,975.6 A6,6 0 0,1 1390.2,984"/></g>
<circle cx="1386.1" cy="979.2" r="1.3" fill="#ffffff"/>
<text x="1397" y="987" font-size="12" fill="#ffffff" textLength="7.0" lengthAdjust="spacingAndGlyphs" >8</text>
<g fill="none" stroke="#ffffff" stroke-width="1.8"><rect x="1707.4" y="976.1" width="5.6" height="4.6" rx="2"/><rect x="1714.2" y="976.1" width="5.6" height="4.6" rx="2"/></g>
<path d="M1705.2,985.4 Q1705.2,981.2 1708.6,981.2 H1718.4 Q1721.8,981.2 1721.8,985.4 Q1721.8,988.8 1713.5,988.8 Q1705.2,988.8 1705.2,985.4 Z" fill="#ffffff"/>
<rect x="1708.8" y="982.3" width="9.1" height="4.8" rx="1.2" fill="#007acc"/>
<g fill="#ffffff"><rect x="1710.4" y="983" width="2.2" height="3.3"/><rect x="1713.9" y="983" width="2.2" height="3.3"/></g>
<text x="1737.7" y="987" font-size="12" fill="#ffffff" textLength="134.7" lengthAdjust="spacingAndGlyphs" >Deck | Connected | Active</text>
<path d="M1889.8,986.3 H1902.2 M1891.4,986 V981 Q1891.4,975.6 1896.2,975.6 H1896.8 M1900.6,982.4 V986 M1894.4,986.6 Q1894.4,988.6 1896,988.6 Q1897.6,988.6 1897.6,986.6" fill="none" stroke="#ffffff" stroke-width="1.2" stroke-linejoin="round"/>
<circle cx="1900.1" cy="977.9" r="3.2" fill="#ffffff"/>
</svg>
</body></html>
